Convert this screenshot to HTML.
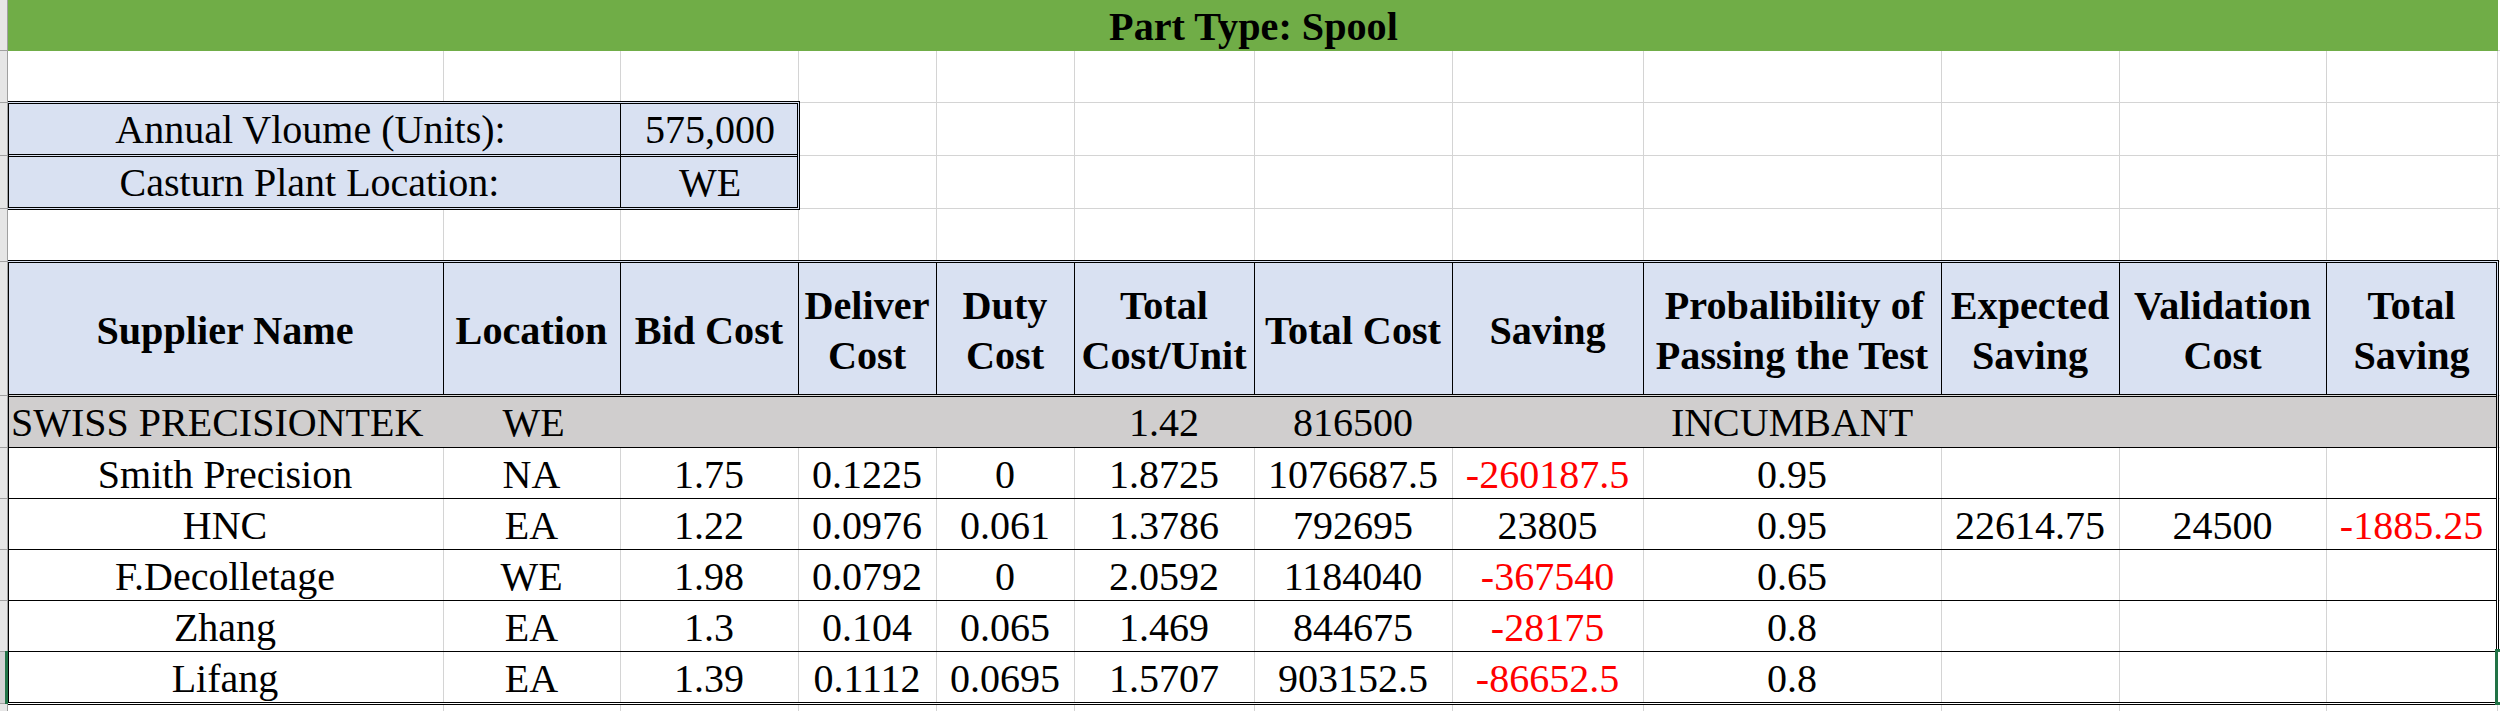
<!DOCTYPE html>
<html><head><meta charset="utf-8"><style>
html,body{margin:0;padding:0;background:#fff;width:2500px;height:711px;overflow:hidden}
svg{display:block}
text{font-family:"Liberation Serif",serif}
</style></head><body>
<svg width="2500" height="711" viewBox="0 0 2500 711" shape-rendering="crispEdges">
<rect x="443" y="51" width="1" height="660" fill="#D4D4D4"/>
<rect x="620" y="51" width="1" height="660" fill="#D4D4D4"/>
<rect x="798" y="51" width="1" height="660" fill="#D4D4D4"/>
<rect x="936" y="51" width="1" height="660" fill="#D4D4D4"/>
<rect x="1074" y="51" width="1" height="660" fill="#D4D4D4"/>
<rect x="1254" y="51" width="1" height="660" fill="#D4D4D4"/>
<rect x="1452" y="51" width="1" height="660" fill="#D4D4D4"/>
<rect x="1643" y="51" width="1" height="660" fill="#D4D4D4"/>
<rect x="1941" y="51" width="1" height="660" fill="#D4D4D4"/>
<rect x="2119" y="51" width="1" height="660" fill="#D4D4D4"/>
<rect x="2326" y="51" width="1" height="660" fill="#D4D4D4"/>
<rect x="2497" y="51" width="1" height="660" fill="#D4D4D4"/>
<rect x="8" y="50" width="2492" height="1" fill="#D4D4D4"/>
<rect x="8" y="102" width="2492" height="1" fill="#D4D4D4"/>
<rect x="8" y="155" width="2492" height="1" fill="#D4D4D4"/>
<rect x="8" y="208" width="2492" height="1" fill="#D4D4D4"/>
<rect x="8" y="261" width="2492" height="1" fill="#D4D4D4"/>
<rect x="8" y="395" width="2492" height="1" fill="#D4D4D4"/>
<rect x="8" y="447" width="2492" height="1" fill="#D4D4D4"/>
<rect x="8" y="498" width="2492" height="1" fill="#D4D4D4"/>
<rect x="8" y="549" width="2492" height="1" fill="#D4D4D4"/>
<rect x="8" y="600" width="2492" height="1" fill="#D4D4D4"/>
<rect x="8" y="651" width="2492" height="1" fill="#D4D4D4"/>
<rect x="8" y="703" width="2492" height="1" fill="#D4D4D4"/>
<rect x="8" y="0" width="2490" height="51" fill="#70AD47"/>
<rect x="8" y="102" width="791" height="107" fill="#D9E1F2"/>
<rect x="8" y="101" width="792" height="1" fill="#000"/>
<rect x="8" y="103" width="790" height="1" fill="#000"/>
<rect x="8" y="209" width="792" height="1" fill="#000"/>
<rect x="8" y="207" width="790" height="1" fill="#000"/>
<rect x="799" y="101" width="1" height="109" fill="#000"/>
<rect x="797" y="103" width="1" height="105" fill="#000"/>
<rect x="8" y="103" width="1" height="105" fill="#000"/>
<rect x="8" y="154" width="790" height="1" fill="#000"/>
<rect x="8" y="156" width="790" height="1" fill="#000"/>
<rect x="620" y="103" width="1" height="105" fill="#000"/>
<rect x="8" y="261" width="2490" height="134" fill="#D9E1F2"/>
<rect x="8" y="395" width="2490" height="53" fill="#D0CECE"/>
<rect x="8" y="448" width="2490" height="256" fill="#FFFFFF"/>
<rect x="443" y="448" width="1" height="255" fill="#D4D4D4"/>
<rect x="620" y="448" width="1" height="255" fill="#D4D4D4"/>
<rect x="798" y="448" width="1" height="255" fill="#D4D4D4"/>
<rect x="936" y="448" width="1" height="255" fill="#D4D4D4"/>
<rect x="1074" y="448" width="1" height="255" fill="#D4D4D4"/>
<rect x="1254" y="448" width="1" height="255" fill="#D4D4D4"/>
<rect x="1452" y="448" width="1" height="255" fill="#D4D4D4"/>
<rect x="1643" y="448" width="1" height="255" fill="#D4D4D4"/>
<rect x="1941" y="448" width="1" height="255" fill="#D4D4D4"/>
<rect x="2119" y="448" width="1" height="255" fill="#D4D4D4"/>
<rect x="2326" y="448" width="1" height="255" fill="#D4D4D4"/>
<rect x="8" y="260" width="2491" height="1" fill="#000"/>
<rect x="8" y="262" width="2489" height="1" fill="#000"/>
<rect x="8" y="394" width="2489" height="1" fill="#000"/>
<rect x="8" y="396" width="2489" height="1" fill="#000"/>
<rect x="443" y="263" width="1" height="131" fill="#000"/>
<rect x="620" y="263" width="1" height="131" fill="#000"/>
<rect x="798" y="263" width="1" height="131" fill="#000"/>
<rect x="936" y="263" width="1" height="131" fill="#000"/>
<rect x="1074" y="263" width="1" height="131" fill="#000"/>
<rect x="1254" y="263" width="1" height="131" fill="#000"/>
<rect x="1452" y="263" width="1" height="131" fill="#000"/>
<rect x="1643" y="263" width="1" height="131" fill="#000"/>
<rect x="1941" y="263" width="1" height="131" fill="#000"/>
<rect x="2119" y="263" width="1" height="131" fill="#000"/>
<rect x="2326" y="263" width="1" height="131" fill="#000"/>
<rect x="8" y="262" width="1" height="441" fill="#000"/>
<rect x="2496" y="262" width="1" height="443" fill="#000"/>
<rect x="2498" y="260" width="1" height="445" fill="#000"/>
<rect x="8" y="447" width="2489" height="1" fill="#000"/>
<rect x="8" y="498" width="2489" height="1" fill="#000"/>
<rect x="8" y="549" width="2489" height="1" fill="#000"/>
<rect x="8" y="600" width="2489" height="1" fill="#000"/>
<rect x="8" y="651" width="2489" height="1" fill="#000"/>
<rect x="8" y="702" width="2489" height="1" fill="#000"/>
<rect x="8" y="704" width="2491" height="1" fill="#000"/>
<rect x="9" y="395" width="2487" height="1" fill="#D8D8D8"/>
<rect x="0" y="0" width="7" height="711" fill="#E6E6E6"/>
<rect x="7" y="0" width="1" height="711" fill="#A0A0A0"/>
<rect x="0" y="50" width="7" height="1" fill="#A0A0A0"/>
<rect x="0" y="102" width="7" height="1" fill="#A0A0A0"/>
<rect x="0" y="155" width="7" height="1" fill="#A0A0A0"/>
<rect x="0" y="208" width="7" height="1" fill="#A0A0A0"/>
<rect x="0" y="261" width="7" height="1" fill="#A0A0A0"/>
<rect x="0" y="395" width="7" height="1" fill="#A0A0A0"/>
<rect x="0" y="447" width="7" height="1" fill="#A0A0A0"/>
<rect x="0" y="498" width="7" height="1" fill="#A0A0A0"/>
<rect x="0" y="549" width="7" height="1" fill="#A0A0A0"/>
<rect x="0" y="600" width="7" height="1" fill="#A0A0A0"/>
<rect x="0" y="651" width="7" height="1" fill="#A0A0A0"/>
<rect x="0" y="703" width="7" height="1" fill="#A0A0A0"/>
<rect x="0" y="652" width="5" height="51" fill="#D2D2D2"/>
<rect x="5" y="651" width="3" height="53" fill="#217346"/>
<rect x="2495" y="649" width="5" height="3" fill="#217346"/>
<rect x="2495" y="702" width="5" height="3" fill="#217346"/>
<rect x="2495" y="649" width="3" height="56" fill="#217346"/>
<rect x="2498" y="652" width="2" height="50" fill="#FFFFFF"/>
<text x="1253.5" y="40" font-size="40.2" font-weight="bold" fill="#000" text-anchor="middle">Part Type: Spool</text>
<text x="310.5" y="143" font-size="40" fill="#000" text-anchor="middle">Annual Vloume (Units):</text>
<text x="309.5" y="196" font-size="40" fill="#000" text-anchor="middle">Casturn Plant Location:</text>
<text x="710" y="143" font-size="40" fill="#000" text-anchor="middle">575,000</text>
<text x="710" y="196" font-size="40" fill="#000" text-anchor="middle">WE</text>
<text x="225.0" y="344" font-size="40.2" font-weight="bold" fill="#000" text-anchor="middle">Supplier Name</text>
<text x="531.5" y="344" font-size="40.2" font-weight="bold" fill="#000" text-anchor="middle">Location</text>
<text x="709.0" y="344" font-size="40.2" font-weight="bold" fill="#000" text-anchor="middle">Bid Cost</text>
<text x="1353.0" y="344" font-size="40.2" font-weight="bold" fill="#000" text-anchor="middle">Total Cost</text>
<text x="1547.5" y="344" font-size="40.2" font-weight="bold" fill="#000" text-anchor="middle">Saving</text>
<text x="867.0" y="319" font-size="40.2" font-weight="bold" fill="#000" text-anchor="middle">Deliver</text>
<text x="867.0" y="368.5" font-size="40.2" font-weight="bold" fill="#000" text-anchor="middle">Cost</text>
<text x="1005.0" y="319" font-size="40.2" font-weight="bold" fill="#000" text-anchor="middle">Duty</text>
<text x="1005.0" y="368.5" font-size="40.2" font-weight="bold" fill="#000" text-anchor="middle">Cost</text>
<text x="1164.0" y="319" font-size="40.2" font-weight="bold" fill="#000" text-anchor="middle">Total</text>
<text x="1164.0" y="368.5" font-size="40.2" font-weight="bold" fill="#000" text-anchor="middle">Cost/Unit</text>
<text x="1794.5" y="319" font-size="40.2" font-weight="bold" fill="#000" text-anchor="middle">Probalibility of</text>
<text x="1792.0" y="368.5" font-size="40.2" font-weight="bold" fill="#000" text-anchor="middle">Passing the Test</text>
<text x="2030.0" y="319" font-size="40.2" font-weight="bold" fill="#000" text-anchor="middle">Expected</text>
<text x="2030.0" y="368.5" font-size="40.2" font-weight="bold" fill="#000" text-anchor="middle">Saving</text>
<text x="2222.5" y="319" font-size="40.2" font-weight="bold" fill="#000" text-anchor="middle">Validation</text>
<text x="2222.5" y="368.5" font-size="40.2" font-weight="bold" fill="#000" text-anchor="middle">Cost</text>
<text x="2411.5" y="319" font-size="40.2" font-weight="bold" fill="#000" text-anchor="middle">Total</text>
<text x="2411.5" y="368.5" font-size="40.2" font-weight="bold" fill="#000" text-anchor="middle">Saving</text>
<text x="11" y="435.5" font-size="40" fill="#000" text-anchor="start">SWISS PRECISIONTEK</text>
<text x="533.5" y="435.5" font-size="40" fill="#000" text-anchor="middle">WE</text>
<text x="1164.0" y="435.5" font-size="40" fill="#000" text-anchor="middle">1.42</text>
<text x="1353.0" y="435.5" font-size="40" fill="#000" text-anchor="middle">816500</text>
<text x="1792.0" y="435.5" font-size="40" fill="#000" text-anchor="middle">INCUMBANT</text>
<text x="225.0" y="488" font-size="40" fill="#000" text-anchor="middle">Smith Precision</text>
<text x="531.5" y="488" font-size="40" fill="#000" text-anchor="middle">NA</text>
<text x="709.0" y="488" font-size="40" fill="#000" text-anchor="middle">1.75</text>
<text x="867.0" y="488" font-size="40" fill="#000" text-anchor="middle">0.1225</text>
<text x="1005.0" y="488" font-size="40" fill="#000" text-anchor="middle">0</text>
<text x="1164.0" y="488" font-size="40" fill="#000" text-anchor="middle">1.8725</text>
<text x="1353.0" y="488" font-size="40" fill="#000" text-anchor="middle">1076687.5</text>
<text x="1547.5" y="488" font-size="40" fill="#FF0000" text-anchor="middle">-260187.5</text>
<text x="1792.0" y="488" font-size="40" fill="#000" text-anchor="middle">0.95</text>
<text x="225.0" y="539" font-size="40" fill="#000" text-anchor="middle">HNC</text>
<text x="531.5" y="539" font-size="40" fill="#000" text-anchor="middle">EA</text>
<text x="709.0" y="539" font-size="40" fill="#000" text-anchor="middle">1.22</text>
<text x="867.0" y="539" font-size="40" fill="#000" text-anchor="middle">0.0976</text>
<text x="1005.0" y="539" font-size="40" fill="#000" text-anchor="middle">0.061</text>
<text x="1164.0" y="539" font-size="40" fill="#000" text-anchor="middle">1.3786</text>
<text x="1353.0" y="539" font-size="40" fill="#000" text-anchor="middle">792695</text>
<text x="1547.5" y="539" font-size="40" fill="#000" text-anchor="middle">23805</text>
<text x="1792.0" y="539" font-size="40" fill="#000" text-anchor="middle">0.95</text>
<text x="2030.0" y="539" font-size="40" fill="#000" text-anchor="middle">22614.75</text>
<text x="2222.5" y="539" font-size="40" fill="#000" text-anchor="middle">24500</text>
<text x="2411.5" y="539" font-size="40" fill="#FF0000" text-anchor="middle">-1885.25</text>
<text x="225.0" y="590" font-size="40" fill="#000" text-anchor="middle">F.Decolletage</text>
<text x="531.5" y="590" font-size="40" fill="#000" text-anchor="middle">WE</text>
<text x="709.0" y="590" font-size="40" fill="#000" text-anchor="middle">1.98</text>
<text x="867.0" y="590" font-size="40" fill="#000" text-anchor="middle">0.0792</text>
<text x="1005.0" y="590" font-size="40" fill="#000" text-anchor="middle">0</text>
<text x="1164.0" y="590" font-size="40" fill="#000" text-anchor="middle">2.0592</text>
<text x="1353.0" y="590" font-size="40" fill="#000" text-anchor="middle">1184040</text>
<text x="1547.5" y="590" font-size="40" fill="#FF0000" text-anchor="middle">-367540</text>
<text x="1792.0" y="590" font-size="40" fill="#000" text-anchor="middle">0.65</text>
<text x="225.0" y="640.5" font-size="40" fill="#000" text-anchor="middle">Zhang</text>
<text x="531.5" y="640.5" font-size="40" fill="#000" text-anchor="middle">EA</text>
<text x="709.0" y="640.5" font-size="40" fill="#000" text-anchor="middle">1.3</text>
<text x="867.0" y="640.5" font-size="40" fill="#000" text-anchor="middle">0.104</text>
<text x="1005.0" y="640.5" font-size="40" fill="#000" text-anchor="middle">0.065</text>
<text x="1164.0" y="640.5" font-size="40" fill="#000" text-anchor="middle">1.469</text>
<text x="1353.0" y="640.5" font-size="40" fill="#000" text-anchor="middle">844675</text>
<text x="1547.5" y="640.5" font-size="40" fill="#FF0000" text-anchor="middle">-28175</text>
<text x="1792.0" y="640.5" font-size="40" fill="#000" text-anchor="middle">0.8</text>
<text x="225.0" y="691.7" font-size="40" fill="#000" text-anchor="middle">Lifang</text>
<text x="531.5" y="691.7" font-size="40" fill="#000" text-anchor="middle">EA</text>
<text x="709.0" y="691.7" font-size="40" fill="#000" text-anchor="middle">1.39</text>
<text x="867.0" y="691.7" font-size="40" fill="#000" text-anchor="middle">0.1112</text>
<text x="1005.0" y="691.7" font-size="40" fill="#000" text-anchor="middle">0.0695</text>
<text x="1164.0" y="691.7" font-size="40" fill="#000" text-anchor="middle">1.5707</text>
<text x="1353.0" y="691.7" font-size="40" fill="#000" text-anchor="middle">903152.5</text>
<text x="1547.5" y="691.7" font-size="40" fill="#FF0000" text-anchor="middle">-86652.5</text>
<text x="1792.0" y="691.7" font-size="40" fill="#000" text-anchor="middle">0.8</text>
</svg>
</body></html>
